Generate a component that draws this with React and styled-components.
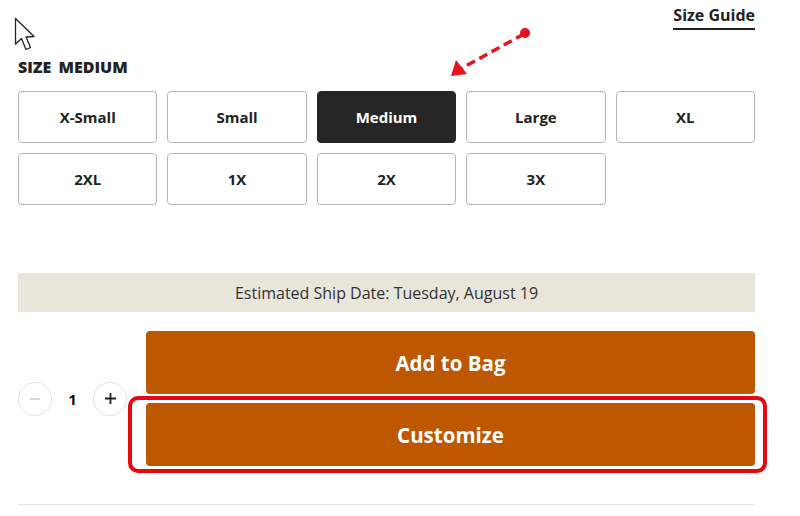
import React from "react";
import styled, { createGlobalStyle } from "styled-components";

const GlobalStyle = createGlobalStyle`
  body {
    margin: 0;
    background: #fff;
    font-family: "Open Sans", "Liberation Sans", sans-serif;
    color: #222;
  }
`;

const StyledPage = styled.main`
  position: relative;
  width: 737px;
  padding: 0 45px 0 18px;
  height: 516px;
  overflow: hidden;
`;

const StyledTopBar = styled.div`
  display: flex;
  justify-content: flex-end;
  align-items: flex-start;
  padding-top: 5px;
  height: 25px;
`;

const StyledSizeGuide = styled.a`
  font-size: 16px;
  font-weight: 700;
  color: #222;
  text-decoration: none;
  line-height: 20px;
  padding-bottom: 3px;
  border-bottom: 2px solid #222;
`;

const StyledSizeLabel = styled.h3`
  margin: 28px 0 0;
  font-size: 16px;
  font-weight: 800;
  line-height: 18px;
  word-spacing: 3px;
  color: #222;
`;

const StyledSizeGrid = styled.div`
  display: grid;
  grid-template-columns: repeat(5, 1fr);
  grid-auto-rows: 52px;
  gap: 10px;
  margin-top: 15px;
`;

const StyledSizeButton = styled.button`
  font-family: inherit;
  font-size: 15px;
  font-weight: 700;
  border-radius: 4px;
  border: 1px solid ${({ $selected }) => ($selected ? "#262626" : "#b5b5b5")};
  background: ${({ $selected }) => ($selected ? "#262626" : "#fff")};
  color: ${({ $selected }) => ($selected ? "#fff" : "#222")};
  cursor: pointer;
`;

const StyledShipBanner = styled.div`
  margin-top: 68px;
  height: 39px;
  display: flex;
  align-items: center;
  justify-content: center;
  background: #e8e5da;
  font-size: 16px;
  color: #333;
`;

const StyledActions = styled.div`
  display: flex;
  margin-top: 19px;
`;

const StyledQuantity = styled.div`
  width: 128px;
  display: flex;
  align-items: center;
`;

const StyledQtyButton = styled.button`
  width: 34px;
  height: 34px;
  border-radius: 50%;
  border: 1px solid #e2e2e2;
  background: #fff;
  display: flex;
  align-items: center;
  justify-content: center;
  padding: 0;
  color: ${({ disabled }) => (disabled ? "#cfcfcf" : "#222")};
`;

const StyledQtyValue = styled.span`
  width: 41px;
  text-align: center;
  font-size: 15px;
  font-weight: 700;
  color: #111;
`;

const StyledButtonStack = styled.div`
  flex: 1;
  display: flex;
  flex-direction: column;
  gap: 9px;
`;

const StyledHighlight = styled.div`
  position: relative;
`;

const StyledRedFrame = styled.div`
  position: absolute;
  top: -7px;
  bottom: -7px;
  left: -18px;
  right: -12px;
  border: 4px solid #e5090f;
  border-radius: 10px;
  pointer-events: none;
`;

const StyledBagButton = styled.button`
  width: 100%;
  height: 63px;
  border: none;
  border-radius: 4px;
  background: #bd5700;
  color: #fff;
  font-family: inherit;
  font-size: 20.5px;
  font-weight: 700;
  display: block;
`;

const StyledDivider = styled.hr`
  margin: 38px 0 0;
  border: none;
  border-top: 1px solid #e4e4e4;
`;

const StyledOverlay = styled.svg`
  position: absolute;
  left: 0;
  top: 0;
  pointer-events: none;
`;

const sizes = ["X-Small", "Small", "Medium", "Large", "XL", "2XL", "1X", "2X", "3X"];

function Cursor() {
  return (
    <StyledOverlay width="40" height="60" viewBox="0 0 40 60">
      <path
        d="M15.5 18.5 L15.5 44 L21.5 38.5 L26 49.5 L30.5 47.5 L26 37 L34 36.5 Z"
        fill="#fff"
        stroke="#222"
        strokeWidth="1.3"
        strokeLinejoin="round"
      />
    </StyledOverlay>
  );
}

function Pointer() {
  return (
    <StyledOverlay width="800" height="120" viewBox="0 0 800 120">
      <line
        x1="524"
        y1="34"
        x2="462"
        y2="68"
        stroke="#e5131b"
        strokeWidth="3.4"
        strokeDasharray="9 5"
      />
      <circle cx="525" cy="33" r="5" fill="#e5131b" />
      <polygon points="451,76 456,60 467,74" fill="#e5131b" />
    </StyledOverlay>
  );
}

export default function App() {
  return (
    <>
      <GlobalStyle />
      <StyledPage>
        <Cursor />
        <Pointer />
        <StyledTopBar>
          <StyledSizeGuide href="#">Size Guide</StyledSizeGuide>
        </StyledTopBar>
        <StyledSizeLabel>SIZE MEDIUM</StyledSizeLabel>
        <StyledSizeGrid>
          {sizes.map((size) => (
            <StyledSizeButton key={size} type="button" $selected={size === "Medium"}>
              {size}
            </StyledSizeButton>
          ))}
        </StyledSizeGrid>
        <StyledShipBanner>Estimated Ship Date: Tuesday, August 19</StyledShipBanner>
        <StyledActions>
          <StyledQuantity>
            <StyledQtyButton type="button" disabled aria-label="Decrease">
              <svg width="12" height="12" viewBox="0 0 12 12">
                <path d="M1 6h10" stroke="currentColor" strokeWidth="1.6" />
              </svg>
            </StyledQtyButton>
            <StyledQtyValue>1</StyledQtyValue>
            <StyledQtyButton type="button" aria-label="Increase">
              <svg width="13" height="13" viewBox="0 0 13 13">
                <path d="M1 6.5h11M6.5 1v11" stroke="currentColor" strokeWidth="1.8" />
              </svg>
            </StyledQtyButton>
          </StyledQuantity>
          <StyledButtonStack>
            <StyledBagButton type="button">Add to Bag</StyledBagButton>
            <StyledHighlight>
              <StyledBagButton type="button">Customize</StyledBagButton>
              <StyledRedFrame />
            </StyledHighlight>
          </StyledButtonStack>
        </StyledActions>
        <StyledDivider />
      </StyledPage>
    </>
  );
}
